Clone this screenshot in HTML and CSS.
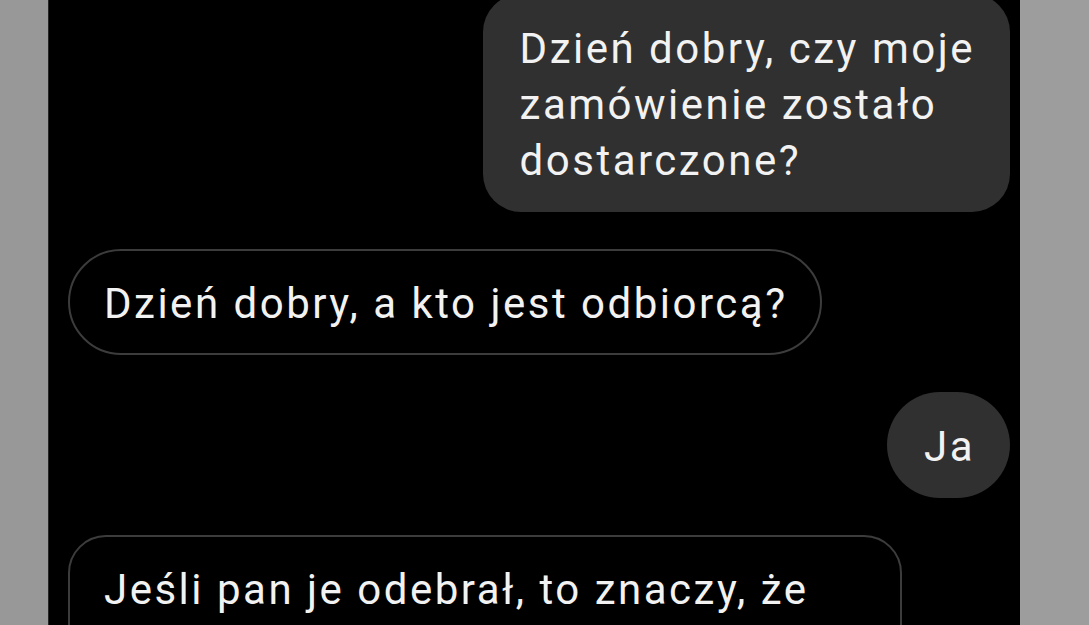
FILE: index.html
```
<!DOCTYPE html>
<html lang="pl">

<head>
    <meta charset="UTF-8">
    <title>Czat</title>
    <link rel="stylesheet" href="styles.css">
</head>

<body>
    <div id="screen">
        <div class="side side-left"></div>
        <div id="chat">
            <div class="msg sent multi">Dzień dobry, czy moje<br>zamówienie zostało<br>dostarczone?</div>
            <div class="msg recv">Dzień dobry, a kto jest odbiorcą?</div>
            <div class="msg sent short">Ja</div>
            <div class="msg recv multi">Jeśli pan je odebrał, to znaczy, że<br>zamówienie zostało już dostarczone</div>
        </div>
        <div class="side side-right"></div>
    </div>
</body>

</html>
```

FILE: styles.css
```
body,
html {
    margin: 0;
    height: 100%;
    overflow: hidden;
    background-color: #000;
}

#screen {
    display: flex;
    height: 100%;
}

.side {
    background-color: #989898;
}

.side-left {
    width: 48px;
    border-right: 1px solid #262626;
}

.side-right {
    width: 69px;
    background-color: #9d9d9d;
}

#chat {
    flex-grow: 1;
    display: flex;
    flex-direction: column;
    align-items: flex-start;
    gap: 37px;
    margin-top: -6px;
    padding: 0 10px 0 19px;
    font-family: Roboto, "Liberation Sans", sans-serif;
    font-size: 42px;
    letter-spacing: 2.5px;
    line-height: 56px;
    color: #f2f2f2;
}

.msg {
    box-sizing: border-box;
    border-radius: 53px;
    padding: 27px 35px 23px 37px;
    white-space: nowrap;
}

.msg.multi {
    border-radius: 38px;
}

.sent {
    align-self: flex-end;
    background-color: #303030;
}

.recv {
    border: 2px solid #3c3c3c;
    padding: 25px 32px 21px 34px;
}
```
